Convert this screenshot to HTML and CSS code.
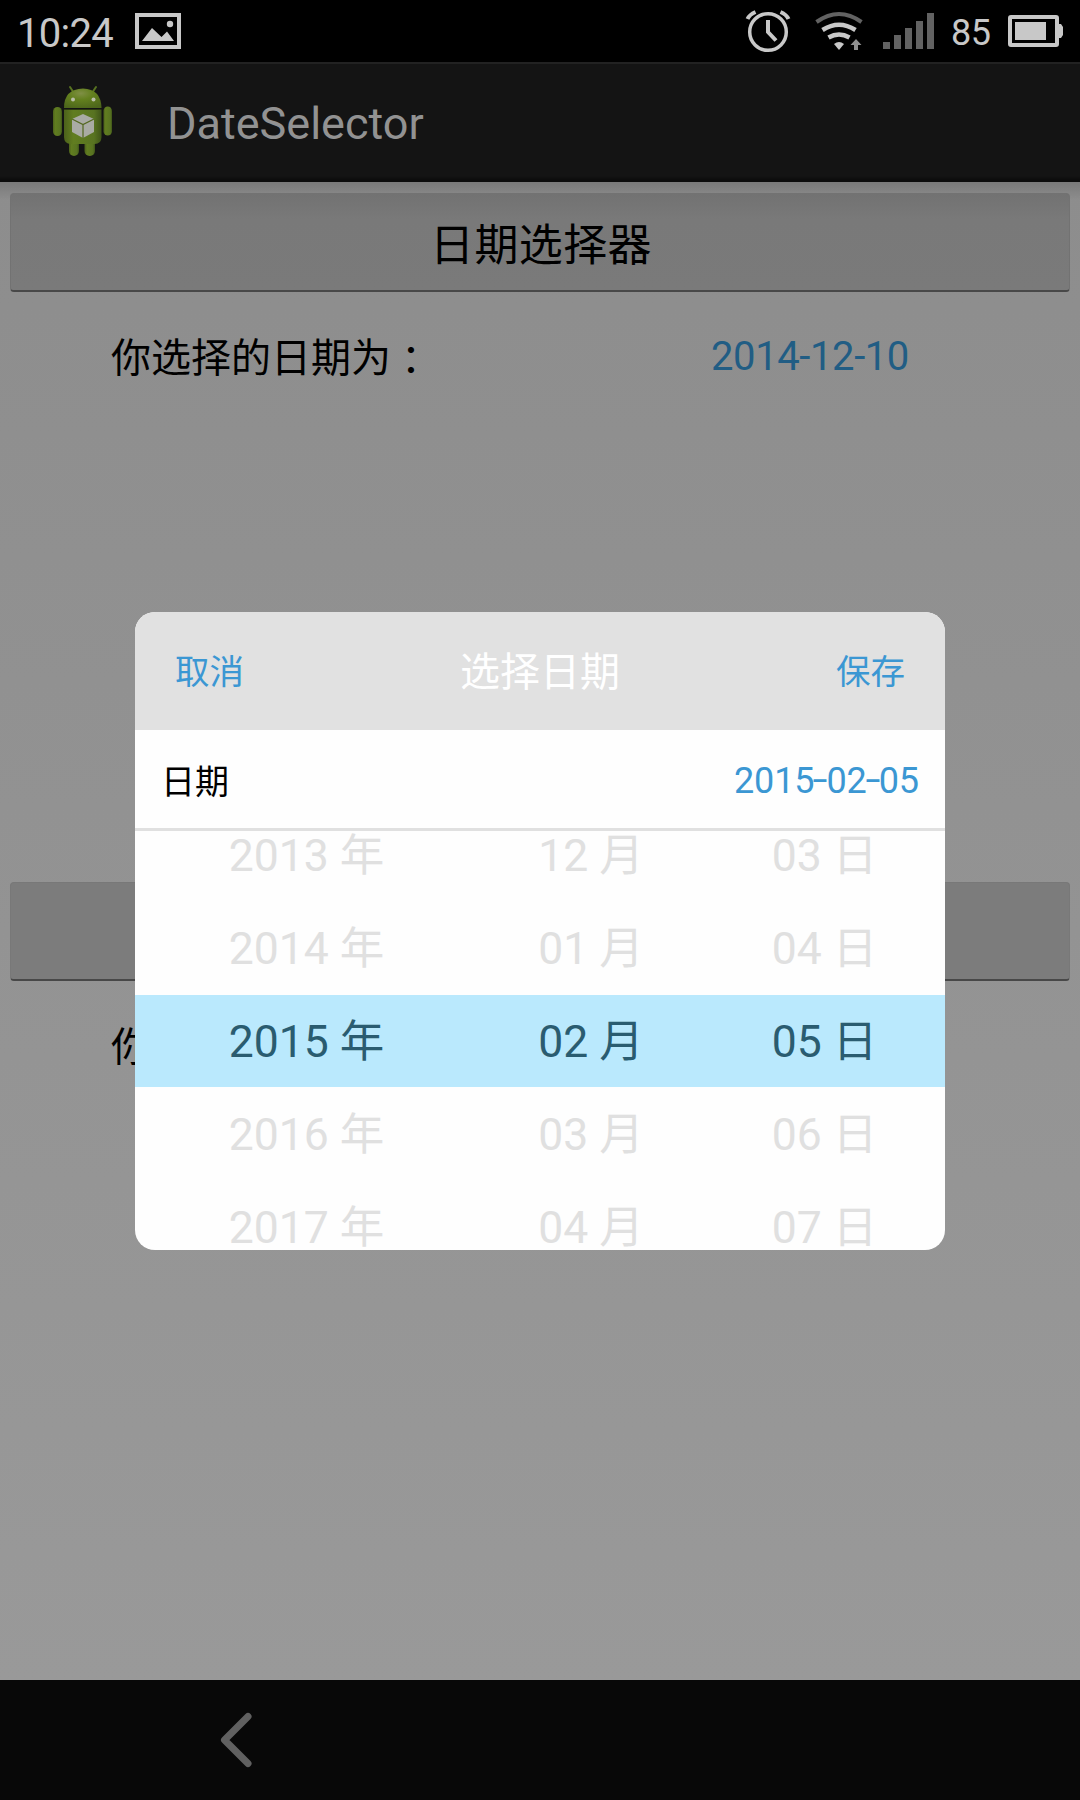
FILE: index.html
```html
<!DOCTYPE html>
<html lang="zh-CN">
<head>
<meta charset="utf-8">
<title>DateSelector</title>
<link rel="stylesheet" href="styles.css">
</head>
<body>
<div class="screen">
  <header class="status">
    <span class="clock">10:24</span>
    <svg class="gallery" width="46" height="36" viewBox="0 0 46 36"><path fill="none" stroke="#c8c8c8" stroke-width="4" d="M2 2h42v32H2z"/><path fill="#c8c8c8" d="M7 28 17 15l9.500 9L32 18.500 39 28z"/><circle cx="35" cy="11" r="3.200" fill="#c8c8c8"/></svg>
    <svg class="signals" width="195" height="62" viewBox="740 0 195 62">
      <g fill="none" stroke="#c8c8c8">
        <circle cx="768" cy="32" r="18.300" stroke-width="3.500"/>
        <path stroke-width="4" d="M768 20v12l8 8.500"/>
        <path stroke-width="4" d="M747.500 19q2-4.500 8-7M788.500 19q-2-4.500-8-7"/>
        <path stroke="#626262" stroke-width="4" d="M816.500 22q22.500-16 45 0"/>
        <path stroke-width="4.500" d="M822.500 30q16.500-10.500 33 0M828.500 37.500q10.500-6 21 0"/>
      </g>
      <path fill="#c8c8c8" d="M839 50l-5-6q5-4 10 0z"/>
      <path fill="#8e8e8e" d="M856 39l5.500 6H858v5h-4v-5h-3.500z"/>
      <path fill="#626262" d="M883 42h7v7h-7zM894 35h7v14h-7zM905 28h7v21h-7zM916 21h7v28h-7zM927 13h7v36h-7z"/>
    </svg>
    <span class="percent">85</span>
    <svg class="battery" width="55" height="32" viewBox="0 0 55 32"><rect x="2" y="2" width="47" height="28" rx="1" fill="none" stroke="#c8c8c8" stroke-width="4"/><path fill="#c8c8c8" d="M7 7h31v18H7zM51 9h2l2 3v8l-2 3h-2z"/></svg>
  </header>

  <div class="action-bar">
    <svg class="robot" width="60" height="72" viewBox="52 85 60 72">
      <defs>
        <linearGradient id="skin" x1="0" x2="1"><stop offset="0" stop-color="#4c611b"/><stop offset=".25" stop-color="#617d20"/><stop offset=".8" stop-color="#587321"/><stop offset="1" stop-color="#3f5418"/></linearGradient>
        <radialGradient id="dome" cx=".45" cy=".25" r=".8"><stop offset="0" stop-color="#7f8f45"/><stop offset=".4" stop-color="#63801e"/><stop offset="1" stop-color="#4d661b"/></radialGradient>
      </defs>
      <path stroke="#587321" stroke-width="2" stroke-linecap="round" d="M70 87l4 6M96 87l-4 6"/>
      <path fill="url(#dome)" d="M64 108q0-19 19-19.500 18 .5 18.500 19.500z"/>
      <g fill="url(#skin)">
        <rect x="53" y="107" width="9" height="29" rx="4.500"/>
        <rect x="103.500" y="106.500" width="8.500" height="29" rx="4.250"/>
        <rect x="69" y="136" width="10" height="20" rx="5"/>
        <rect x="84.500" y="136" width="10.500" height="20" rx="5"/>
        <path d="M64 110h37.500v27q0 7-7 7h-23.500q-7 0-7-7z"/>
      </g>
      <path stroke="#2b3810" stroke-width="1" d="M64 109.500h37.500"/>
      <circle cx="73" cy="99.500" r="2" fill="#b9bda9"/><circle cx="93.500" cy="99.500" r="2" fill="#b9bda9"/>
      <path fill="#a9aba4" d="M83 114l11 5v13l-11 6-11-6v-13z"/>
      <path fill="none" stroke="#53671f" stroke-width="1.200" d="M72 119l11 5.500 11-5.500M83 124.500V138"/>
    </svg>
    <h1 class="title">DateSelector</h1>
  </div>

  <main class="content">
    <button class="pick">日期选择器</button>
    <div class="result"><span class="label">你选择的日期为<span class="colon" lang="zh-TW">：</span></span><span class="value">2014-12-10</span></div>
    <button class="pick second"></button>
    <div class="result"><span class="label">你</span></div>
  </main>

  <nav class="nav"><svg width="32" height="56" viewBox="0 0 32 56"><path fill="none" stroke="#606060" stroke-width="7" stroke-linecap="round" stroke-linejoin="round" d="M28 4.500 4.500 28 28 51.500"/></svg></nav>

  <section class="dialog">
    <div class="dialog-head"><span class="action">取消</span><span class="dialog-title">选择日期</span><span class="action">保存</span></div>
    <div class="current"><span class="caption">日期</span><span class="date">2015<span class="dash">-</span>02<span class="dash">-</span>05</span></div>
    <div class="wheels">
      <div class="row"><span>2013 年</span><span>12 月</span><span>03 日</span></div>
      <div class="row"><span>2014 年</span><span>01 月</span><span>04 日</span></div>
      <div class="row selected"><span>2015 年</span><span>02 月</span><span>05 日</span></div>
      <div class="row"><span>2016 年</span><span>03 月</span><span>06 日</span></div>
      <div class="row"><span>2017 年</span><span>04 月</span><span>07 日</span></div>
    </div>
  </section>
</div>
</body>
</html>
```
FILE: styles.css
```css
* { box-sizing: border-box; }

body {
  margin: 0;
  background: #000;
  font-family: Roboto, "Noto Sans CJK SC", sans-serif;
}

.screen {
  position: relative;
  display: flex;
  flex-direction: column;
  width: 1080px;
  height: 1800px;
  overflow: hidden;
}

.status {
  display: flex;
  height: 62px;
  padding-left: 17px;
  background: #000;
  color: #c8c8c8;
}

.clock { width: 118px; font-size: 40px; letter-spacing: -.7px; line-height: 67px; }
.gallery { margin-top: 13px; }
.signals { margin-left: 559px; }
.percent { margin-left: 16px; width: 57px; font-size: 36px; letter-spacing: -.5px; line-height: 67px; }
.battery { margin-top: 15px; }

.action-bar {
  display: flex;
  height: 120px;
  padding-left: 52px;
  border-top: 2px solid #222;
  background: linear-gradient(#141414 112px, #0c0c0c 116px);
}

.robot { margin-top: 21px; }

.title {
  margin: 30px 0 0 55px;
  color: #929292;
  font-size: 45px;
  font-weight: 400;
  line-height: 60px;
}

.content {
  flex: 1;
  padding: 11px 10px 0;
  background:
    linear-gradient(rgba(0, 0, 0, .14), rgba(0, 0, 0, 0)) 0 0 / 100% 18px no-repeat,
    linear-gradient(#8d8d8d, #999);
}

.pick {
  display: block;
  width: 1060px;
  height: 99px;
  padding: 0 0 0 2px;
  border: 1px solid #727272;
  border-bottom: 2px solid #484848;
  border-radius: 4px;
  background: linear-gradient(#727272, #797979 25px, #7a7a7a);
  color: #000;
  font: 400 44px/96px "Noto Sans CJK SC", sans-serif;
  letter-spacing: .4px;
}

.second {
  border-color: #787878 #787878 #484848;
  background: #7c7c7c;
}

.result {
  display: flex;
  height: 590px;
  padding: 36px 0 0 101px;
  font-size: 40px;
  line-height: 58px;
}

.label { width: 600px; line-height: 61px; }
.colon { font-family: "Noto Sans CJK TC", sans-serif; line-height: 0; vertical-align: -3px; }
.value { color: #215d84; letter-spacing: -.4px; }

.nav {
  display: flex;
  align-items: center;
  height: 120px;
  padding-left: 220px;
  background: #080808;
}

.dialog {
  position: absolute;
  left: 135px;
  top: 612px;
  width: 810px;
  height: 638px;
  overflow: hidden;
  border-radius: 20px;
  background: #fefefe;
}

.dialog-head {
  display: flex;
  justify-content: space-between;
  align-items: center;
  height: 118px;
  padding: 0 40px 4px;
  background: #e1e1e1;
}

.action { color: #3b97d3; font-size: 34.5px; }
.dialog-title { color: #fff; font-size: 40px; }

.current {
  display: flex;
  justify-content: space-between;
  height: 101px;
  padding: 0 26px;
  border-bottom: 3px solid #e0e0e0;
  font-size: 34px;
  line-height: 102px;
}

.caption { line-height: 104px; }
.date { color: #3b97d3; font-size: 36px; letter-spacing: -.1px; }
.dash {
  display: inline-block;
  width: 12px;
  text-align: center;
  transform: translateY(-1px) scaleX(1.5);
}

.wheels { height: 419px; overflow: hidden; }
.row {
  display: grid;
  grid-template-columns: 341px 228px 239px;
  height: 93px;
  padding-left: 1px;
  color: #e0e0e0;
  font-size: 44.500px;
  line-height: 94px;
  text-align: center;
}
.row:first-child { margin-top: -22px; }
.selected {
  border-bottom: 1px solid #fefefe;
  background: #bae9fd;
  color: #2a5c70;
}
```
